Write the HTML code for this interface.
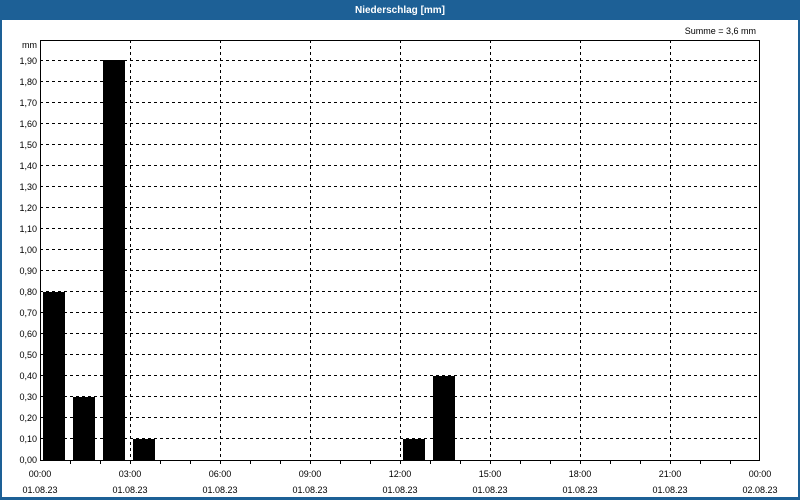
<!DOCTYPE html>
<html><head><style>
html,body{margin:0;padding:0;background:#fff;}
body{width:800px;height:500px;overflow:hidden;position:relative;font-family:"Liberation Sans",sans-serif;}
</style></head><body>
<svg width="800" height="500" xmlns="http://www.w3.org/2000/svg" style="position:absolute;left:0;top:0" font-family="Liberation Sans, sans-serif" font-size="9">
<rect x="0" y="0" width="800" height="500" fill="#1d6096"/>
<rect x="2" y="20" width="796" height="477" fill="#fff"/>
<text x="400" y="13" fill="#fff" font-weight="bold" font-size="10" text-anchor="middle">Niederschlag [mm]</text>
<text x="756" y="34" text-anchor="end" fill="#000">Summe = 3,6 mm</text>
<text x="37" y="48" text-anchor="end">mm</text>
<g stroke="#000" stroke-width="1" stroke-dasharray="3,3" shape-rendering="crispEdges">
<line x1="40" y1="60.5" x2="760" y2="60.5"/><line x1="40" y1="81.5" x2="760" y2="81.5"/><line x1="40" y1="102.5" x2="760" y2="102.5"/><line x1="40" y1="123.5" x2="760" y2="123.5"/><line x1="40" y1="144.5" x2="760" y2="144.5"/><line x1="40" y1="165.5" x2="760" y2="165.5"/><line x1="40" y1="186.5" x2="760" y2="186.5"/><line x1="40" y1="207.5" x2="760" y2="207.5"/><line x1="40" y1="228.5" x2="760" y2="228.5"/><line x1="40" y1="249.5" x2="760" y2="249.5"/><line x1="40" y1="270.5" x2="760" y2="270.5"/><line x1="40" y1="291.5" x2="760" y2="291.5"/><line x1="40" y1="312.5" x2="760" y2="312.5"/><line x1="40" y1="333.5" x2="760" y2="333.5"/><line x1="40" y1="354.5" x2="760" y2="354.5"/><line x1="40" y1="375.5" x2="760" y2="375.5"/><line x1="40" y1="396.5" x2="760" y2="396.5"/><line x1="40" y1="417.5" x2="760" y2="417.5"/><line x1="40" y1="438.5" x2="760" y2="438.5"/>
<line x1="130.5" y1="40" x2="130.5" y2="460"/><line x1="220.5" y1="40" x2="220.5" y2="460"/><line x1="310.5" y1="40" x2="310.5" y2="460"/><line x1="400.5" y1="40" x2="400.5" y2="460"/><line x1="490.5" y1="40" x2="490.5" y2="460"/><line x1="580.5" y1="40" x2="580.5" y2="460"/><line x1="670.5" y1="40" x2="670.5" y2="460"/>
</g>
<g fill="#000">
<rect x="43" y="292" width="22" height="168"/>
<rect x="73" y="397" width="22" height="63"/>
<rect x="103" y="60" width="22" height="400"/>
<rect x="133" y="439" width="22" height="21"/>
<rect x="403" y="439" width="22" height="21"/>
<rect x="433" y="376" width="22" height="84"/>
</g>
<rect x="40.5" y="40.5" width="719" height="420" fill="none" stroke="#000" shape-rendering="crispEdges"/>
<g stroke="#000" shape-rendering="crispEdges">
<line x1="70.5" y1="460" x2="70.5" y2="464"/><line x1="100.5" y1="460" x2="100.5" y2="464"/><line x1="130.5" y1="460" x2="130.5" y2="464"/><line x1="160.5" y1="460" x2="160.5" y2="464"/><line x1="190.5" y1="460" x2="190.5" y2="464"/><line x1="220.5" y1="460" x2="220.5" y2="464"/><line x1="250.5" y1="460" x2="250.5" y2="464"/><line x1="280.5" y1="460" x2="280.5" y2="464"/><line x1="310.5" y1="460" x2="310.5" y2="464"/><line x1="340.5" y1="460" x2="340.5" y2="464"/><line x1="370.5" y1="460" x2="370.5" y2="464"/><line x1="400.5" y1="460" x2="400.5" y2="464"/><line x1="430.5" y1="460" x2="430.5" y2="464"/><line x1="460.5" y1="460" x2="460.5" y2="464"/><line x1="490.5" y1="460" x2="490.5" y2="464"/><line x1="520.5" y1="460" x2="520.5" y2="464"/><line x1="550.5" y1="460" x2="550.5" y2="464"/><line x1="580.5" y1="460" x2="580.5" y2="464"/><line x1="610.5" y1="460" x2="610.5" y2="464"/><line x1="640.5" y1="460" x2="640.5" y2="464"/><line x1="670.5" y1="460" x2="670.5" y2="464"/><line x1="700.5" y1="460" x2="700.5" y2="464"/><line x1="730.5" y1="460" x2="730.5" y2="464"/>
</g>
<g text-anchor="end">
<text x="37" y="64">1,90</text><text x="37" y="85">1,80</text><text x="37" y="106">1,70</text><text x="37" y="127">1,60</text><text x="37" y="148">1,50</text><text x="37" y="169">1,40</text><text x="37" y="190">1,30</text><text x="37" y="211">1,20</text><text x="37" y="232">1,10</text><text x="37" y="253">1,00</text><text x="37" y="274">0,90</text><text x="37" y="295">0,80</text><text x="37" y="316">0,70</text><text x="37" y="337">0,60</text><text x="37" y="358">0,50</text><text x="37" y="379">0,40</text><text x="37" y="400">0,30</text><text x="37" y="421">0,20</text><text x="37" y="442">0,10</text><text x="37" y="463">0,00</text>
</g>
<g text-anchor="middle">
<text x="40" y="477">00:00</text><text x="40" y="493">01.08.23</text>
<text x="130" y="477">03:00</text><text x="130" y="493">01.08.23</text>
<text x="220" y="477">06:00</text><text x="220" y="493">01.08.23</text>
<text x="310" y="477">09:00</text><text x="310" y="493">01.08.23</text>
<text x="400" y="477">12:00</text><text x="400" y="493">01.08.23</text>
<text x="490" y="477">15:00</text><text x="490" y="493">01.08.23</text>
<text x="580" y="477">18:00</text><text x="580" y="493">01.08.23</text>
<text x="670" y="477">21:00</text><text x="670" y="493">01.08.23</text>
<text x="760" y="477">00:00</text><text x="760" y="493">02.08.23</text>
</g>
</svg>
</body></html>
